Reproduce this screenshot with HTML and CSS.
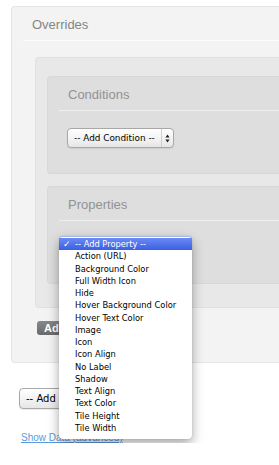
FILE: index.html
```html
<!DOCTYPE html>
<html lang="en">
<head>
  <meta charset="UTF-8">
  <title>Overrides</title>
  <link rel="stylesheet" href="styles.css">
</head>
<body>
  <div class="panel outer">
    <div class="panel-head">Overrides</div>
    <div class="panel-body">
      <div class="panel group">
        <div class="panel inner">
          <div class="panel-head">Conditions</div>
          <div class="inner-body">
            <span class="select">
              <span class="select-text">-- Add Condition --</span>
              <span class="select-arrows">
                <svg width="5" height="9" viewBox="0 0 5 9"><path d="M2.5 0.5 L4.6 3.6 H0.4 Z M2.5 8.5 L4.6 5.4 H0.4 Z" fill="#222"/></svg>
              </span>
            </span>
          </div>
        </div>

        <div class="panel inner">
          <div class="panel-head">Properties</div>
          <div class="inner-body">
            <div class="select-wrap">
              <span class="select">
                <span class="select-text">-- Add Property --</span>
                <span class="select-arrows">
                  <svg width="5" height="9" viewBox="0 0 5 9"><path d="M2.5 0.5 L4.6 3.6 H0.4 Z M2.5 8.5 L4.6 5.4 H0.4 Z" fill="#222"/></svg>
                </span>
              </span>
              <ul class="menu">
                <li class="menu-item selected"><span class="check">&#10003;</span>-- Add Property --</li>
                <li class="menu-item">Action (URL)</li>
                <li class="menu-item">Background Color</li>
                <li class="menu-item">Full Width Icon</li>
                <li class="menu-item">Hide</li>
                <li class="menu-item">Hover Background Color</li>
                <li class="menu-item">Hover Text Color</li>
                <li class="menu-item">Image</li>
                <li class="menu-item">Icon</li>
                <li class="menu-item">Icon Align</li>
                <li class="menu-item">No Label</li>
                <li class="menu-item">Shadow</li>
                <li class="menu-item">Text Align</li>
                <li class="menu-item">Text Color</li>
                <li class="menu-item">Tile Height</li>
                <li class="menu-item">Tile Width</li>
              </ul>
            </div>
          </div>
        </div>
      </div>
      <button class="btn-dark">Add Override</button>
    </div>
  </div>

  <div class="after">
    <span class="select wide">
      <span class="select-text">-- Add Field --</span>
      <span class="select-arrows">
        <svg width="5" height="9" viewBox="0 0 5 9"><path d="M2.5 0.5 L4.6 3.6 H0.4 Z M2.5 8.5 L4.6 5.4 H0.4 Z" fill="#222"/></svg>
      </span>
    </span>
    <a class="data-link" href="#">Show Data (advanced)</a>
  </div>
</body>
</html>
```

FILE: styles.css
```css
body {
  margin: 0;
  padding: 6px 0 0 11px;
  background: #ffffff;
  font-family: "Liberation Sans", Arial, sans-serif;
  overflow: hidden;
}
.panel {
  border: 1px solid #e4e4e4;
  border-right: none;
  border-radius: 4px 0 0 4px;
}
.outer {
  background: #f3f3f3;
  height: 355px;
}
.panel-head {
  margin-left: 11px;
  padding: 10px 0 8px 9px;
  font-size: 13px;
  line-height: 15px;
  color: #858585;
  border-bottom: 1px solid #fbfbfb;
}
.panel-body {
  padding: 16px 0 0 23px;
}
.group {
  background: #e8e8e8;
  border-color: #e1e1e1;
  padding: 18px 0 23px 11px;
}
.inner {
  background: #dedede;
  border-color: #d8d8d8;
  margin-bottom: 12px;
}
.inner:last-child {
  margin-bottom: 0;
}
.inner .panel-head {
  color: #929292;
  border-bottom-color: #efefef;
}
.inner-body {
  padding: 16px 0 25px 19px;
}
.select-wrap {
  position: relative;
}
.select {
  display: inline-flex;
  align-items: stretch;
  width: 107px;
  height: 20px;
  box-sizing: border-box;
  border: 1px solid #a8a8a8;
  border-radius: 4px;
  background: linear-gradient(#ffffff, #f1f1f1 60%, #e6e6e6);
  box-shadow: 0 1px 1px rgba(0,0,0,0.08);
  font-family: "DejaVu Sans", Verdana, sans-serif;
  font-size: 8.9px;
  color: #000;
}
.select-text {
  flex: 1;
  padding-left: 6px;
  line-height: 18px;
  white-space: nowrap;
  overflow: hidden;
}
.select-arrows {
  width: 11px;
  border-left: 1px solid #cfcfcf;
  display: flex;
  align-items: center;
  justify-content: center;
}
.menu {
  position: absolute;
  top: -1px;
  left: -8px;
  width: 133px;
  margin: 0;
  padding: 1px 0 5px;
  list-style: none;
  background: #ffffff;
  border-top: 1px solid #a9bbea;
  border-radius: 4px;
  box-shadow: 0 5px 12px rgba(0,0,0,0.35), 0 0 1px rgba(0,0,0,0.3);
  font-family: "DejaVu Sans", Verdana, sans-serif;
  font-size: 8.3px;
  color: #000;
  z-index: 5;
}
.menu-item {
  position: relative;
  height: 12.25px;
  line-height: 12.25px;
  padding-left: 16px;
  white-space: nowrap;
}
.menu-item.selected {
  background: linear-gradient(#6a8bf4, #3b5fe3);
  color: #ffffff;
}
.check {
  position: absolute;
  left: 4px;
  top: 0;
  font-size: 9px;
}
.btn-dark {
  display: block;
  margin: 13px 0 0 2px;
  height: 14px;
  padding: 0 7px;
  border: none;
  border-radius: 3px;
  background: linear-gradient(#878787, #6a6a6a);
  color: #ffffff;
  font-family: "Liberation Sans", Arial, sans-serif;
  font-weight: bold;
  font-size: 11px;
  line-height: 14px;
}
.after {
  padding: 25px 0 0 8px;
}
.select.wide {
  width: 130px;
  height: 21px;
}
.select.wide .select-text {
  font-size: 10px;
  line-height: 19px;
}
.data-link {
  display: block;
  margin: 23px 0 0 2px;
  font-size: 10px;
  color: #5a9bdc;
}
```
